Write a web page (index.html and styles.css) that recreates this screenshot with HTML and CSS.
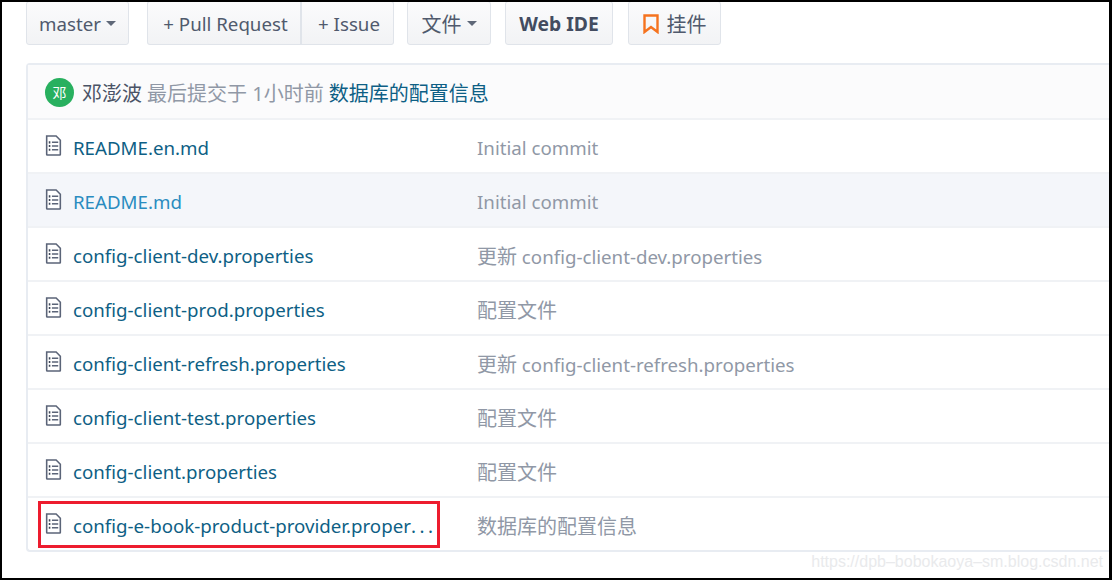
FILE: index.html
```html
<!DOCTYPE html>
<html>
	<head>
		<link rel="stylesheet" href="styles.css">
		<title>config-e-book-product-provider</title>
	</head>
	<body>
		<div class="frame">
			<div class="toolbar">
				<a class="btn btn-master">master <i class="caret"></i></a>
				<div class="btn-group">
					<a class="btn btn-pull">+ Pull Request</a>
					<a class="btn btn-issue">+ Issue</a>
				</div>
				<a class="btn btn-files"><span class="zh">文件</span> <i class="caret"></i></a>
				<a class="btn btn-bold">Web IDE</a>
				<a class="btn btn-widget">
					<svg class="bookmark" width="16" height="20" viewBox="0 0 16 20"><path d="M1.500 1.500h13v16.500l-6.500-5-6.500 5z" fill="none" stroke="#f5731f" stroke-width="2.400"/></svg>
					<span class="zh">挂件</span>
				</a>
			</div>
			<div class="card">
				<div class="card-head">
					<span class="avatar">邓</span>
					<span class="author zh">邓澎波</span>
					<span class="muted zh">最后提交于 1小时前</span>
					<a class="commit-link zh">数据库的配置信息</a>
				</div>
				<div class="row">
					<div class="name"><svg class="file-icon" viewBox="0 0 16 20"><use href="#file"/></svg><a>README.en.md</a></div>
					<div class="msg">Initial commit</div>
				</div>
				<div class="row row-hover">
					<div class="name"><svg class="file-icon" viewBox="0 0 16 20"><use href="#file"/></svg><a>README.md</a></div>
					<div class="msg">Initial commit</div>
				</div>
				<div class="row">
					<div class="name"><svg class="file-icon" viewBox="0 0 16 20"><use href="#file"/></svg><a>config-client-dev.properties</a></div>
					<div class="msg"><span class="zh">更新</span> config-client-dev.properties</div>
				</div>
				<div class="row">
					<div class="name"><svg class="file-icon" viewBox="0 0 16 20"><use href="#file"/></svg><a>config-client-prod.properties</a></div>
					<div class="msg zh">配置文件</div>
				</div>
				<div class="row">
					<div class="name"><svg class="file-icon" viewBox="0 0 16 20"><use href="#file"/></svg><a>config-client-refresh.properties</a></div>
					<div class="msg"><span class="zh">更新</span> config-client-refresh.properties</div>
				</div>
				<div class="row">
					<div class="name"><svg class="file-icon" viewBox="0 0 16 20"><use href="#file"/></svg><a>config-client-test.properties</a></div>
					<div class="msg zh">配置文件</div>
				</div>
				<div class="row">
					<div class="name"><svg class="file-icon" viewBox="0 0 16 20"><use href="#file"/></svg><a>config-client.properties</a></div>
					<div class="msg zh">配置文件</div>
				</div>
				<div class="row">
					<div class="name"><svg class="file-icon" viewBox="0 0 16 20"><use href="#file"/></svg><a>config-e-book-product-provider.proper<span class="dots">...</span></a></div>
					<div class="msg zh">数据库的配置信息</div>
				</div>
			</div>
			<div class="red-box"></div>
			<div class="watermark">https://dpb&#8211;bobokaoya&#8211;sm.blog.csdn.net</div>
		</div>
		<svg width="0" height="0" class="defs">
			<symbol id="file" viewBox="0 0 16 20">
				<path d="M1.500 1h9l4 4v13.500q0 .5-.5.5h-12q-.5 0-.5-.5z" fill="#fff" stroke="#5b6478" stroke-width="1.500"/>
				<path d="M3.500 7h1.500M3.500 10.500h1.500M3.500 14h1.500" stroke="#3d4657" stroke-width="2"/>
				<path d="M6.500 7h6M6.500 10.500h6M6.500 14h6" stroke="#5b6478" stroke-width="1.400"/>
			</symbol>
		</svg>
	</body>
</html>
```

FILE: styles.css
```css
* {
	box-sizing: border-box;
}
body {
	margin: 0;
	background: #fff;
	font-family: "Noto Sans", "Noto Sans CJK SC", sans-serif;
	font-size: 18.7px;
}
.zh {
	font-size: 20px;
}
.frame {
	position: relative;
	width: 1112px;
	height: 580px;
	border: 2px solid #000;
	border-right-width: 3px;
	overflow: hidden;
	padding-left: 24px;
}
.defs {
	position: absolute;
}
.toolbar {
	display: flex;
	height: 44px;
	margin-top: -1px;
}
.btn {
	display: flex;
	align-items: center;
	justify-content: center;
	gap: 5px;
	height: 44px;
	padding-top: 1px;
	color: #505a6d;
	background: linear-gradient(#fbfbfc, #f2f3f5);
	border: 1px solid #e0e4ea;
	border-radius: 3px;
	white-space: nowrap;
}
.btn-master {
	width: 103px;
}
.btn-group {
	display: flex;
	margin-left: 18px;
}
.btn-pull {
	width: 155px;
	padding-left: 3px;
	border-right: 2px solid #e0e4ea;
	border-radius: 3px 0 0 3px;
}
.btn-issue {
	width: 92px;
	padding-left: 3px;
	border-left: 0;
	border-radius: 0 3px 3px 0;
}
.btn-files {
	width: 84px;
	margin-left: 13px;
}
.btn-bold {
	width: 108px;
	margin-left: 14px;
	font-size: 19.3px;
	font-weight: 700;
	color: #434c60;
}
.btn-widget {
	width: 93px;
	margin-left: 15px;
	gap: 8px;
}
.caret {
	width: 0;
	height: 0;
	border-left: 5px solid transparent;
	border-right: 5px solid transparent;
	border-top: 5px solid #5f6878;
}
.card {
	margin-top: 18px;
	border: 2px solid #e8ecf2;
	border-right: 0;
	border-radius: 4px 0 0 4px;
}
.card-head {
	display: flex;
	align-items: center;
	height: 53px;
	padding-left: 17px;
	padding-top: 1px;
	background: #fbfbfc;
	white-space: pre;
}
.avatar {
	display: flex;
	align-items: center;
	justify-content: center;
	width: 29px;
	height: 29px;
	margin-right: 8px;
	border-radius: 50%;
	background: #28b05f;
	color: #fff;
	font-size: 14px;
}
.author {
	color: #4a5366;
	margin-right: 5px;
}
.muted {
	color: #9098a6;
	margin-right: 5px;
}
.commit-link {
	color: #0e5f85;
}
.row {
	display: flex;
	align-items: center;
	height: 54px;
	padding-top: 2px;
	border-top: 2px solid #f0f2f5;
}
.name {
	display: flex;
	align-items: center;
	width: 449px;
	padding-left: 17px;
	white-space: nowrap;
}
.name a {
	color: #0e5f85;
}
.row-hover {
	background: #f4f6fa;
}
.row-hover .name a {
	color: #2a8cc0;
}
.dots {
	letter-spacing: 3.500px;
}
.file-icon {
	width: 17px;
	height: 21px;
	margin-right: 11px;
	margin-top: -3px;
}
.msg {
	color: #9098a6;
}
.red-box {
	position: absolute;
	left: 36px;
	top: 499px;
	width: 402px;
	height: 47px;
	border: 3px solid #ed1c2e;
}
.watermark {
	position: absolute;
	right: 6px;
	top: 551px;
	font-family: "Liberation Sans", sans-serif;
	font-size: 16px;
	color: #e9eaec;
}
```
